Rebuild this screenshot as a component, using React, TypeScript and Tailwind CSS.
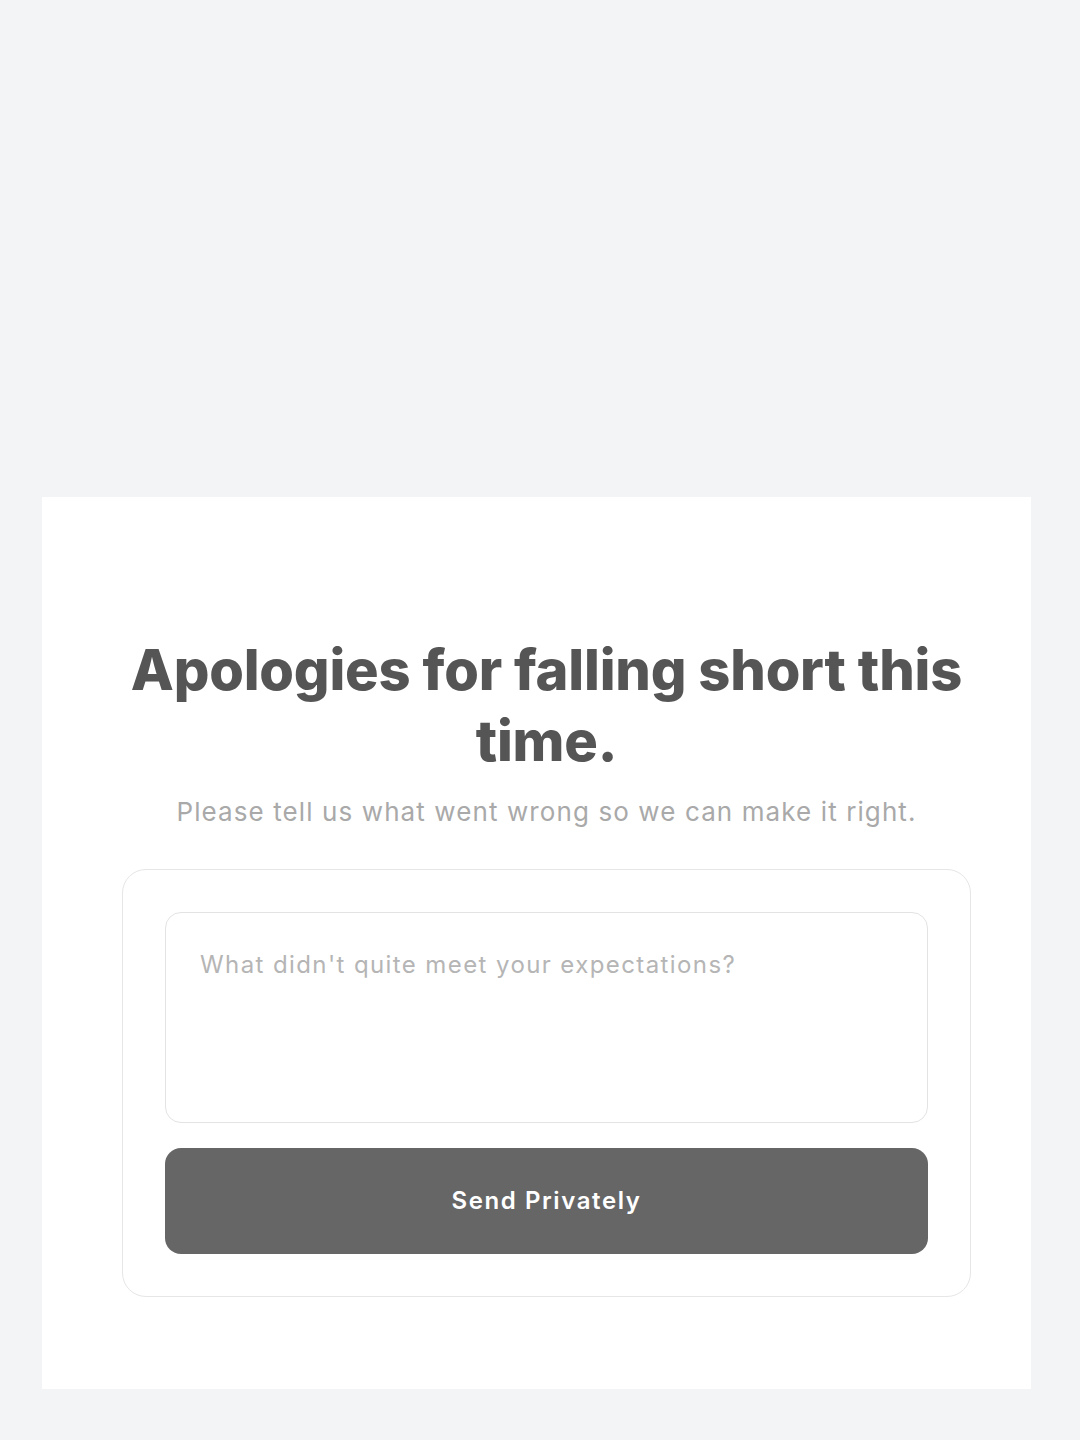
import React, { useState } from 'react';

const App: React.FC = () => {
  const [feedback, setFeedback] = useState('');

  return (
    <div
      className="min-h-screen bg-[#f3f4f6] pt-[497px] pb-[50px] pl-[42px] pr-[49px]"
      style={{ fontFamily: 'Inter, "Noto Sans", sans-serif' }}
    >
      <div className="bg-white pl-[80px] pr-[60px] pt-[138px] pb-[92px]">
        <h1 className="text-center text-[56px] leading-[71px] font-extrabold text-[#555555] tracking-[-0.2px]">
          Apologies for falling short this time.
        </h1>
        <p className="mt-[16px] text-center text-[26px] leading-[38px] text-[#a9a9a9] tracking-[1.1px]">
          Please tell us what went wrong so we can make it right.
        </p>
        <div className="mt-[38px] rounded-[24px] border border-[#e6e6e6] p-[42px]">
          <textarea
            value={feedback}
            onChange={(e) => setFeedback(e.target.value)}
            placeholder="What didn't quite meet your expectations?"
            className="block h-[211px] w-full resize-none rounded-[16px] border border-[#e3e3e3] px-[34px] pt-[35px] pb-[25px] text-[24px] leading-[34px] tracking-[1.4px] text-[#555] placeholder:text-[#b5b5b5] outline-none"
          />
          <button
            type="button"
            className="mt-[25px] h-[106px] w-full rounded-[16px] bg-[#666666] text-[24px] font-semibold tracking-[1.6px] text-white"
          >
            Send Privately
          </button>
        </div>
      </div>
    </div>
  );
};

export default App;
